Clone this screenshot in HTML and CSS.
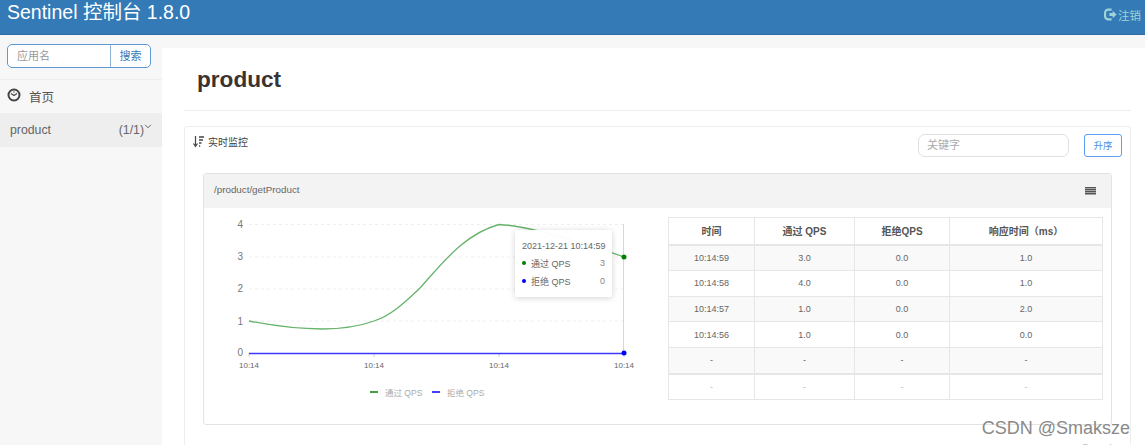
FILE: index.html
```html
<!DOCTYPE html>
<html lang="zh">
<head>
<meta charset="utf-8">
<title>Sentinel 控制台</title>
<link rel="stylesheet" href="styles.css">
</head>
<body>
<header class="topbar">
  <span class="brand">Sentinel 控制台 1.8.0</span>
  <a class="logout">
    <svg class="logout-icon" viewBox="0 0 12 12" width="13" height="13"><path d="M7 1.500H4a3 3 0 0 0-3 3v3a3 3 0 0 0 3 3h3" fill="none" stroke="currentColor" stroke-width="2"/><path d="M5 4.700h3V2.600L11.600 6 8 9.400V7.300H5z" fill="currentColor"/></svg>注销
  </a>
</header>
<div class="layout">
  <aside class="sidebar">
    <div class="search">
      <span class="search-input">应用名</span>
      <span class="search-btn">搜索</span>
    </div>
    <div class="nav-home">
      <svg viewBox="0 0 14 14" width="14" height="14"><circle cx="7" cy="7" r="5.500" fill="none" stroke="#444" stroke-width="2"/><path d="M7 7.500L4 5.500M7 7.500l3-2" stroke="#444" stroke-width="1.200"/><circle cx="7" cy="4" r=".7" fill="#444"/></svg>
      <span>首页</span>
    </div>
    <div class="nav-app">
      <span>product</span>
      <span class="nav-count">(1/1)<svg viewBox="0 0 9 6" width="8" height="5"><path d="M1 1l3.500 3.500L8 1" fill="none" stroke="#555" stroke-width="1.100"/></svg></span>
    </div>
  </aside>
  <main class="main">
    <div class="page-head"><h1>product</h1></div>
    <section class="card">
      <div class="card-top">
        <div class="card-title">
          <svg viewBox="0 0 11 12" width="11" height="12"><path d="M2.500 0v9M.5 7.500l2 3 2-3" fill="none" stroke="#444" stroke-width="1.200"/><path d="M6 1h5M6 4h4M6 7h2.500M6 10h1.200" stroke="#444" stroke-width="1.300"/></svg>
          <span>实时监控</span>
        </div>
        <div class="card-tools">
          <span class="keyword">关键字</span>
          <span class="sort-btn">升序</span>
        </div>
      </div>
      <div class="panel">
        <div class="panel-head">
          <span class="panel-path">/product/getProduct</span>
          <svg viewBox="0 0 11 8" width="11" height="8"><path d="M0 .75h11M0 2.750h11M0 4.750h11M0 6.750h11" stroke="#555" stroke-width="1.300"/></svg>
        </div>
        <div class="panel-body">
          <div class="chart">
            <svg class="chart-svg" viewBox="204 208 465 217" width="465" height="217">
              <g stroke="#eeeeee" stroke-dasharray="3 3">
                <path d="M249 224.500H624M249 257H624M249 289H624M249 321H624"/>
              </g>
              <path d="M623.500 224V353" stroke="#d8d8d8"/>
              <path d="M249 353v4M374 353v4M499 353v4M624 353v4" stroke="#d0d0d0"/>
              <path d="M249 321C280 327 305 329 322 329C345 329 360 326 374 321C392 315 405 302 420 288C445 260 465 234 499 224.500C530 226 585 243 624 257" fill="none" stroke="#66b36a" stroke-width="1.300"/>
              <path d="M249 353.500H624" stroke="#3a3aff" stroke-width="1.300"/>
              <circle cx="624" cy="257" r="2.500" fill="#008000"/>
              <circle cx="624" cy="353" r="2.500" fill="#0000ff"/>
              <g class="axis-y" text-anchor="end">
                <text x="243" y="228">4</text>
                <text x="243" y="260">3</text>
                <text x="243" y="292">2</text>
                <text x="243" y="325">1</text>
                <text x="243" y="356">0</text>
              </g>
              <g class="axis-x" text-anchor="middle">
                <text x="249" y="368">10:14</text>
                <text x="374" y="368">10:14</text>
                <text x="499" y="368">10:14</text>
                <text x="624" y="368">10:14</text>
              </g>
              <path d="M370 392h8" stroke="#008000" stroke-width="1.500"/>
              <path d="M432 392h8" stroke="#0000ff" stroke-width="1.500"/>
              <g class="legend">
                <text x="385" y="395.500">通过 QPS</text>
                <text x="447" y="395.500">拒绝 QPS</text>
              </g>
            </svg>
            <div class="tooltip">
              <div class="tip-time">2021-12-21 10:14:59</div>
              <div class="tip-row"><i class="dot dot-green"></i><span>通过 QPS</span><b>3</b></div>
              <div class="tip-row"><i class="dot dot-blue"></i><span>拒绝 QPS</span><b>0</b></div>
            </div>
          </div>
          <table class="stats">
            <thead>
              <tr><th>时间</th><th>通过 QPS</th><th>拒绝QPS</th><th>响应时间（ms）</th></tr>
            </thead>
            <tbody>
              <tr><td>10:14:59</td><td>3.0</td><td>0.0</td><td>1.0</td></tr>
              <tr><td>10:14:58</td><td>4.0</td><td>0.0</td><td>1.0</td></tr>
              <tr><td>10:14:57</td><td>1.0</td><td>0.0</td><td>2.0</td></tr>
              <tr><td>10:14:56</td><td>1.0</td><td>0.0</td><td>0.0</td></tr>
              <tr class="last-a"><td>-</td><td>-</td><td>-</td><td>-</td></tr>
              <tr class="last-b"><td>-</td><td>-</td><td>-</td><td>-</td></tr>
            </tbody>
          </table>
        </div>
      </div>
    </section>
  </main>
</div>
<div class="watermark">CSDN @Smaksze</div>
<div class="watermark-small">CSDN @Smaksze</div>
</body>
</html>
```
FILE: styles.css
```css
* { box-sizing: border-box; }
html, body { margin: 0; height: 445px; overflow: hidden; }
body {
  position: relative;
  font-family: "Liberation Sans", "Noto Sans CJK SC", sans-serif;
  color: #555;
  background: #f7f7f7;
}
.topbar {
  height: 35px;
  background: #337ab7;
  border-bottom: 1px solid #2e6da4;
  display: flex;
  justify-content: space-between;
  padding: 0 4px 0 7px;
}
.brand { color: #fff; font-size: 19.500px; line-height: 24px; }
.logout {
  display: flex;
  align-items: center;
  height: 29px;
  gap: 1px;
  color: #9fd3d6;
  font-size: 11.500px;
}
.layout { display: flex; }
.sidebar { width: 162px; flex: none; padding-top: 9px; }
.search {
  display: flex;
  width: 144px;
  height: 24px;
  margin: 0 0 11px 7px;
  background: #fff;
  border: 1px solid #5b9bd5;
  border-radius: 5px;
  font-size: 11px;
  line-height: 22px;
}
.search-input { flex: 1; padding-left: 9px; color: #999; }
.search-btn { width: 40px; text-align: center; color: #337ab7; border-left: 1px solid #8db4d8; }
.nav-home {
  display: flex;
  align-items: center;
  gap: 8px;
  height: 34px;
  padding: 0 0 3px 7px;
  border-top: 1px solid #eeeeee;
  font-size: 12.500px;
  color: #555;
}
.nav-home span { position: relative; top: 1px; }
.nav-app {
  display: flex;
  justify-content: space-between;
  height: 34px;
  padding: 10px 10px 0 10px;
  background: #eeeeee;
  font-size: 12.300px;
  line-height: 15px;
  color: #666;
}
.nav-count svg { vertical-align: 5px; }
.main { flex: 1; margin-top: 13px; height: 397px; padding: 0 15px 0 22px; background: #fff; }
.page-head { height: 63px; padding: 19px 0 0 13px; border-bottom: 1px solid #eeeeee; }
h1 { margin: 0; font-size: 22.600px; line-height: 26px; font-weight: 700; color: #3a3330; }
.card {
  margin-top: 15px;
  height: 340px;
  padding: 0 18px 0 18px;
  border: 1px solid #eeeeee;
  border-bottom: 0;
  border-radius: 3px 3px 0 0;
}
.card-top { display: flex; justify-content: space-between; height: 46px; margin: 0 -10px 0 -10px; }
.card-title { display: flex; align-items: center; gap: 4px; height: 29px; font-size: 10px; color: #444; }
.card-tools { display: flex; gap: 15px; padding-top: 7px; }
.keyword {
  width: 151px;
  height: 23px;
  padding-left: 8px;
  border: 1px solid #e0e0e0;
  border-radius: 7px;
  font-size: 11px;
  line-height: 20px;
  color: #aaa;
}
.sort-btn {
  width: 38px;
  height: 23px;
  border: 1px solid #5b9fee;
  border-radius: 3px;
  text-align: center;
  font-size: 9.500px;
  line-height: 21px;
  color: #4a90e2;
}
.panel { width: 909px; height: 252px; border: 1px solid #e3e3e3; border-radius: 3px; }
.panel-head {
  display: flex;
  justify-content: space-between;
  align-items: center;
  height: 34px;
  padding: 0 15px 0 10px;
  background: #f3f3f3;
  font-size: 9.800px;
  color: #666;
}
.panel-path { position: relative; top: -2px; }
.panel-body { display: flex; }
.chart { position: relative; width: 464px; flex: none; height: 217px; }
.chart-svg { display: block; }
.axis-y text { font-size: 10px; fill: #777; font-family: "Liberation Sans", sans-serif; }
.axis-x text { font-size: 8px; fill: #666; font-family: "Liberation Sans", sans-serif; }
.legend text { font-size: 8.500px; fill: #aaa; }
.tooltip {
  position: absolute;
  left: 311px;
  top: 22px;
  width: 97px;
  height: 67px;
  padding: 10px 7px 0;
  background: rgba(255, 255, 255, .96);
  border-radius: 2px;
  box-shadow: 0 1px 6px rgba(0, 0, 0, .18);
  font-size: 9px;
  color: #666;
}
.tip-time { line-height: 12px; margin-bottom: 2px; white-space: nowrap; }
.tip-row { display: flex; align-items: center; height: 18px; gap: 5px; }
.tip-row span { flex: 1; }
.tip-row b { font-weight: 400; color: #888; }
.dot { width: 4px; height: 4px; border-radius: 50%; }
.dot-green { background: #008000; }
.dot-blue { background: #0000ff; }
.stats {
  width: 435px;
  height: 183px;
  margin-top: 9px;
  table-layout: fixed;
  border-collapse: collapse;
  border: 1px solid #e6e6e6;
  font-size: 9px;
  color: #666;
}
.stats th, .stats td { border: 1px solid #e6e6e6; padding: 0; text-align: center; }
.stats th { height: 27px; font-size: 10px; font-weight: 700; color: #555; border-bottom-width: 2px; }
.stats th:nth-child(1) { width: 86px; }
.stats th:nth-child(2) { width: 100px; }
.stats th:nth-child(3) { width: 95px; }
.stats td { height: 25.500px; }
.stats tbody tr:nth-child(odd) { background: #f9f9f9; }
.stats .last-a { border-bottom: 2px solid #e6e6e6; }
.stats .last-b td { color: #bbb; }
.watermark {
  position: absolute;
  right: 15px;
  top: 418px;
  font-size: 18px;
  line-height: 21px;
  color: #8a8a8a;
}
.watermark-small {
  position: absolute;
  right: 16px;
  top: 441px;
  font-size: 9.500px;
  line-height: 13px;
  color: #aaa;
}
```
